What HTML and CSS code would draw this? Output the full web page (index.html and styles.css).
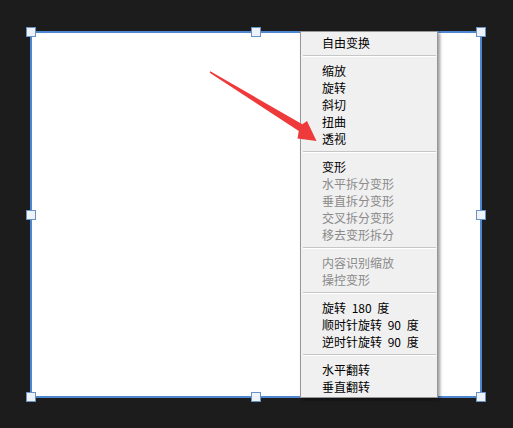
FILE: index.html
```html
<!DOCTYPE html>
<html lang="zh">
<head>
<meta charset="utf-8">
<title>自由变换</title>
<link rel="stylesheet" href="styles.css">
</head>
<body>
<div class="canvas">
  <div class="overlay">
    <span class="handle h-tl"></span>
    <span class="handle h-tc"></span>
    <span class="handle h-tr"></span>
    <span class="handle h-ml"></span>
    <span class="handle h-mr"></span>
    <span class="handle h-bl"></span>
    <span class="handle h-bc"></span>
    <span class="handle h-br"></span>
    <ul class="menu">
      <li class="item">自由变换</li>
      <li class="sep"></li>
      <li class="item">缩放</li>
      <li class="item">旋转</li>
      <li class="item">斜切</li>
      <li class="item">扭曲</li>
      <li class="item">透视</li>
      <li class="sep"></li>
      <li class="item">变形</li>
      <li class="item disabled">水平拆分变形</li>
      <li class="item disabled">垂直拆分变形</li>
      <li class="item disabled">交叉拆分变形</li>
      <li class="item disabled">移去变形拆分</li>
      <li class="sep"></li>
      <li class="item disabled">内容识别缩放</li>
      <li class="item disabled">操控变形</li>
      <li class="sep"></li>
      <li class="item">旋转 180 度</li>
      <li class="item">顺时针旋转 90 度</li>
      <li class="item">逆时针旋转 90 度</li>
      <li class="sep"></li>
      <li class="item">水平翻转</li>
      <li class="item">垂直翻转</li>
    </ul>
  </div>
</div>
<svg class="arrow" width="513" height="428" viewBox="0 0 513 428">
  <polygon points="210.3,71.2 302.3,124.2 307,121 316.5,141 297.5,138.5 298.8,131 209.7,72.8" fill="#ee3a3a"/>
</svg>
</body>
</html>
```
FILE: styles.css
```css
html, body {
  margin: 0;
  padding: 0;
}
body {
  background: #1c1c1c;
  width: 513px;
  height: 428px;
  overflow: hidden;
  position: relative;
  font-family: "Noto Sans CJK SC", "Noto Sans", sans-serif;
}
.canvas {
  box-sizing: border-box;
  width: 452px;
  height: 367px;
  margin: 31px 0 0 30px;
  background: #ffffff;
  border: 2px solid #4f86d0;
  position: relative;
}
.overlay {
  position: absolute;
  inset: -2px;
}
.handle {
  position: absolute;
  box-sizing: border-box;
  width: 10px;
  height: 10px;
  background: #eef2f9;
  border: 1px solid #6a92c8;
  transform: translate(-50%, -50%);
}
.h-tl { left: 1px; top: 1px; }
.h-tc { left: 50%; top: 1px; }
.h-tr { left: calc(100% - 1px); top: 1px; }
.h-ml { left: 1px; top: 50%; }
.h-mr { left: calc(100% - 1px); top: 50%; }
.h-bl { left: 1px; top: calc(100% - 1px); }
.h-bc { left: 50%; top: calc(100% - 1px); }
.h-br { left: calc(100% - 1px); top: calc(100% - 1px); }
.menu {
  position: absolute;
  left: 270px;
  top: 0;
  bottom: 0;
  width: 138px;
  box-sizing: border-box;
  margin: 0;
  padding: 2px 0 0 0;
  list-style: none;
  background: #f0f0f0;
  border: 1px solid #979797;
  box-shadow: 2px 2px 3px rgba(0, 0, 0, 0.4);
}
.item {
  font-size: 12px;
  line-height: 17px;
  height: 17px;
  padding-left: 21px;
  color: #000000;
  white-space: nowrap;
  word-spacing: 3px;
}
.item.disabled {
  color: #8a8a8a;
}
.sep {
  margin: 4px 1px 5px 2px;
  border-top: 1px solid #c6c6c6;
  border-bottom: 1px solid #ffffff;
}
.arrow {
  position: absolute;
  left: 0;
  top: 0;
  pointer-events: none;
}
```
